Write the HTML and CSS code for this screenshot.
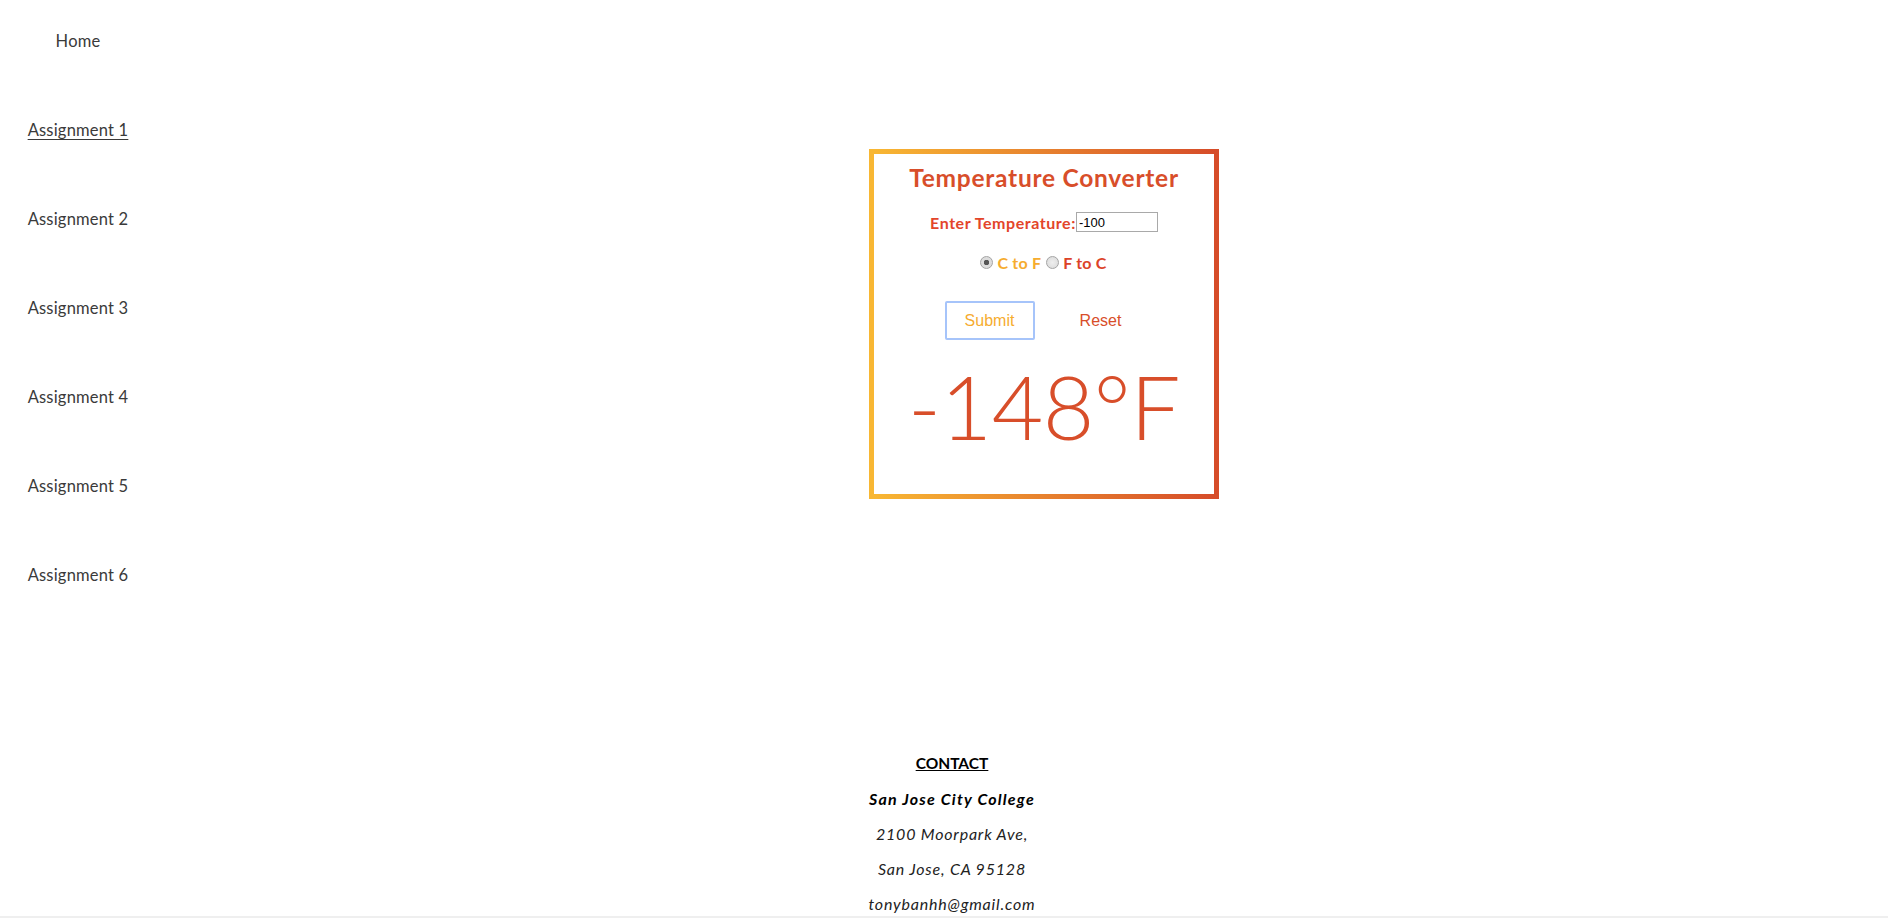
FILE: index.html
```html
<!DOCTYPE html>
<html lang="en">
<head>
<meta charset="utf-8">
<title>Temperature Converter</title>
<link rel="stylesheet" href="styles.css">
</head>
<body>
<div class="page">
  <div class="top">
    <nav class="nav">
      <a class="nav-link" href="#">Home</a>
      <a class="nav-link active" href="#">Assignment 1</a>
      <a class="nav-link" href="#">Assignment 2</a>
      <a class="nav-link" href="#">Assignment 3</a>
      <a class="nav-link" href="#">Assignment 4</a>
      <a class="nav-link" href="#">Assignment 5</a>
      <a class="nav-link" href="#">Assignment 6</a>
    </nav>
    <main class="main">
      <section class="converter">
        <h1 class="title">Temperature Converter</h1>
        <div class="field">
          <label class="field-label" for="temp">Enter Temperature:</label><input class="field-input" id="temp" type="text" value="-100">
        </div>
        <div class="radios">
          <input class="radio" type="radio" name="dir" id="c2f" checked><label class="radio-label c2f" for="c2f">C to F</label>
          <input class="radio" type="radio" name="dir" id="f2c"><label class="radio-label f2c" for="f2c">F to C</label>
        </div>
        <div class="buttons">
          <button class="btn btn-submit" type="button">Submit</button>
          <button class="btn btn-reset" type="button">Reset</button>
        </div>
        <div class="result">-148°F</div>
      </section>
    </main>
  </div>
  <footer class="footer">
    <p class="footer-line contact">CONTACT</p>
    <p class="footer-line college">San Jose City College</p>
    <p class="footer-line">2100 Moorpark Ave,</p>
    <p class="footer-line">San Jose, CA 95128</p>
    <p class="footer-line">tonybanhh@gmail.com</p>
  </footer>
</div>
<div class="bottom-bar"></div>
</body>
</html>
```
FILE: styles.css
```css
html, body {
  margin: 0;
  padding: 0;
  background: #ffffff;
}
body {
  font-family: "Lato", "Open Sans", sans-serif;
  color: #333333;
  overflow: hidden;
}
.page {
  display: flex;
  flex-direction: column;
}
.top {
  display: flex;
  flex-direction: row;
  align-items: flex-start;
}
.nav {
  width: 156px;
  flex: none;
  display: flex;
  flex-direction: column;
  align-items: center;
  padding-top: 30px;
  gap: 67px;
}
.nav-link {
  display: block;
  font-size: 16.5px;
  line-height: 22px;
  font-weight: 400;
  color: #3a3a3a;
  text-decoration: none;
  letter-spacing: 0.2px;
}
.nav-link.active {
  text-decoration: underline;
  text-underline-offset: 3px;
}
.main {
  flex: 1;
  display: flex;
  justify-content: center;
  padding-top: 149px;
  padding-left: 44px;
}
.converter {
  box-sizing: border-box;
  width: 350px;
  height: 350px;
  border: 5px solid;
  border-image: linear-gradient(to right, #f8b733, #d64c29) 1;
  display: flex;
  flex-direction: column;
  align-items: center;
  padding-top: 9px;
}
.title {
  margin: 0;
  font-size: 24.5px;
  line-height: 30px;
  font-weight: 700;
  color: #d84e2a;
  letter-spacing: 0.75px;
}
.field {
  margin-top: 19px;
  display: flex;
  align-items: center;
  height: 20px;
}
.field-label {
  font-size: 16px;
  font-weight: 700;
  color: #e3452a;
  letter-spacing: 0.55px;
}
.field-input {
  box-sizing: border-box;
  width: 82px;
  height: 20px;
  margin: 0;
  padding: 0 2px;
  border: 1px solid #a9a9a9;
  font-family: "Liberation Sans", Arial, sans-serif;
  font-size: 13px;
  color: #000;
}
.radios {
  margin-top: 20px;
  display: flex;
  align-items: center;
  height: 20px;
  padding-left: 4px;
}
.radio {
  appearance: none;
  -webkit-appearance: none;
  box-sizing: border-box;
  width: 13px;
  height: 13px;
  margin: 0 4px 0 0;
  border: 1px solid #a4a4a4;
  border-radius: 50%;
  background: radial-gradient(circle, #eeeeee 0%, #d8d8d8 100%);
}
.radio:checked {
  background: radial-gradient(circle, #555555 0 2.5px, #dcdcdc 3px);
}
.radio-label {
  font-size: 16px;
  font-weight: 700;
  margin-right: 5px;
  letter-spacing: 0.2px;
}
.c2f { color: #f6ac2f; }
.f2c { color: #dc4328; }
.buttons {
  margin-top: 29px;
  display: flex;
  gap: 21px;
  padding-left: 2px;
}
.btn {
  box-sizing: border-box;
  width: 90px;
  height: 39px;
  background: #ffffff;
  font-family: "Liberation Sans", Arial, sans-serif;
  font-size: 16px;
  border-radius: 2px;
  cursor: pointer;
}
.btn-submit {
  border: 2px solid #a6c4fa;
  color: #f6ac2f;
}
.btn-reset {
  border: 2px solid transparent;
  color: #d84e2a;
}
.result {
  margin-top: 14px;
  font-size: 89px;
  line-height: 104px;
  font-weight: 300;
  color: #d84e2a;
  letter-spacing: -0.5px;
}
.footer {
  margin-top: 160px;
  display: flex;
  flex-direction: column;
  align-items: center;
  padding-left: 16px;
}
.footer-line {
  margin: 0;
  font-size: 16px;
  line-height: 35px;
  font-style: italic;
  color: #222222;
  letter-spacing: 0.8px;
}
.contact {
  font-style: normal;
  font-weight: 700;
  text-decoration: underline;
  color: #000;
  letter-spacing: 0;
  font-size: 15.5px;
}
.college {
  font-weight: 700;
  color: #000;
  letter-spacing: 1.2px;
}
.bottom-bar {
  position: fixed;
  left: 0;
  right: 0;
  bottom: 0;
  height: 2px;
  background: #efefef;
}
```
